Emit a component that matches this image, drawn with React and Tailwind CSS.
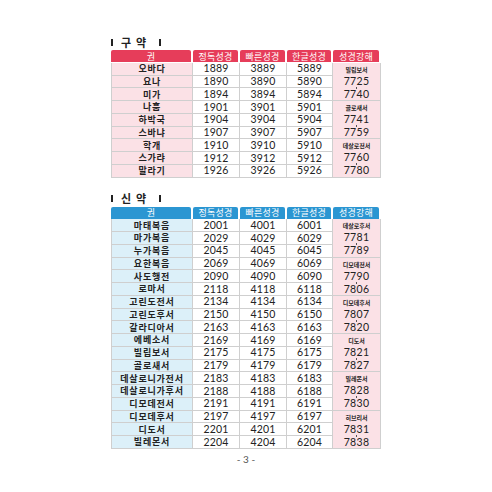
import React from "react";

const oldBooks = [
  ["오바다", 1889, 3889, 5889],
  ["요나", 1890, 3890, 5890],
  ["미가", 1894, 3894, 5894],
  ["나훔", 1901, 3901, 5901],
  ["하박국", 1904, 3904, 5904],
  ["스바냐", 1907, 3907, 5907],
  ["학개", 1910, 3910, 5910],
  ["스가랴", 1912, 3912, 5912],
  ["말라기", 1926, 3926, 5926],
];

const oldStudies = [
  ["빌립보서", 7725, 7740],
  ["골로새서", 7741, 7759],
  ["데살로전서", 7760, 7780],
];

const newBooks = [
  ["마태복음", 2001, 4001, 6001],
  ["마가복음", 2029, 4029, 6029],
  ["누가복음", 2045, 4045, 6045],
  ["요한복음", 2069, 4069, 6069],
  ["사도행전", 2090, 4090, 6090],
  ["로마서", 2118, 4118, 6118],
  ["고린도전서", 2134, 4134, 6134],
  ["고린도후서", 2150, 4150, 6150],
  ["갈라디아서", 2163, 4163, 6163],
  ["에베소서", 2169, 4169, 6169],
  ["빌립보서", 2175, 4175, 6175],
  ["골로새서", 2179, 4179, 6179],
  ["데살로니가전서", 2183, 4183, 6183],
  ["데살로니가후서", 2188, 4188, 6188],
  ["디모데전서", 2191, 4191, 6191],
  ["디모데후서", 2197, 4197, 6197],
  ["디도서", 2201, 4201, 6201],
  ["빌레몬서", 2204, 4204, 6204],
];

const newStudies = [
  ["데살로후서", 7781, 7789],
  ["디모데전서", 7790, 7806],
  ["디모데후서", 7807, 7820],
  ["디도서", 7821, 7827],
  ["빌레몬서", 7828, 7830],
  ["히브리서", 7831, 7838],
];

const heads = ["권", "정독성경", "빠른성경", "한글성경", "성경강해"];

const num = { fontFamily: 'Lato, "Noto Sans", sans-serif' };

const Title = ({ text }) => (
  <div className="flex items-center h-[12px] gap-[8px] text-[11px] font-bold text-[#222] tracking-[5px]">
    <span className="w-[2px] h-[7px] bg-[#222]" />
    <span className="leading-none">{text}</span>
    <span className="w-[2px] h-[7px] bg-[#222]" />
  </div>
);

const BookTable = ({ books, studies, head, side }) => (
  <div className="grid grid-cols-[82px_47px_47px_46px_48px] auto-rows-[12.75px] w-[270px]">
    {heads.map((h) => (
      <div
        key={h}
        className={`h-[12px] mr-[2px] last:mr-0 rounded-t-[2px] flex items-center justify-center text-white text-[9px] tracking-[0.2px] leading-none ${head}`}
      >
        {h}
      </div>
    ))}
    {books.map(([name, a, b, c], i) => (
      <React.Fragment key={name}>
        <div
          className={`col-start-1 border-l border-b border-r border-[#cfcfcf] flex items-center justify-center text-[9px] font-semibold text-[#222] tracking-[0.8px] leading-none ${side}`}
          style={{ gridRow: i + 2 }}
        >
          {name}
        </div>
        {[a, b, c].map((n, k) => (
          <div
            key={k}
            className="border-b border-r border-[#cfcfcf] flex items-center justify-center text-[10.5px] tracking-[0.2px] text-[#222] leading-none"
            style={{ ...num, gridRow: i + 2, gridColumn: k + 2 }}
          >
            {n}
          </div>
        ))}
      </React.Fragment>
    ))}
    {studies.map(([name, from, to], g) => (
      <div
        key={name}
        className="col-start-5 row-span-3 bg-[#fbe1e6] border-b border-r border-[#cfcfcf] flex flex-col items-center pt-[4px] text-[#222]"
        style={{ gridRow: `${g * 3 + 2} / span 3` }}
      >
        <span className="text-[6px] leading-[7px] font-semibold">{name}</span>
        <span className="text-[10.5px] leading-[11px] mt-[2px] tracking-[0.3px]" style={num}>{from}</span>
        <span className="w-[1px] h-[2px] bg-[#555]" />
        <span className="text-[10.5px] leading-[11px] tracking-[0.3px]" style={num}>{to}</span>
      </div>
    ))}
  </div>
);

export default function App() {
  return (
    <div
      className="w-[492px] h-[492px] bg-white pt-[36px] pl-[111px]"
      style={{ fontFamily: '"Noto Sans", "Noto Sans CJK KR", sans-serif' }}
    >
      <Title text="구약" />
      <div className="mt-[2px]">
        <BookTable books={oldBooks} studies={oldStudies} head="bg-[#e63d5a]" side="bg-[#fbe1e6]" />
      </div>
      <div className="mt-[15px]">
        <Title text="신약" />
      </div>
      <div className="mt-[2px]">
        <BookTable books={newBooks} studies={newStudies} head="bg-[#2b96d2]" side="bg-[#dcf0f9]" />
      </div>
      <div className="w-[270px] mt-[5px] text-center text-[10px] text-[#555] leading-none" style={num}>- 3 -</div>
    </div>
  );
}
